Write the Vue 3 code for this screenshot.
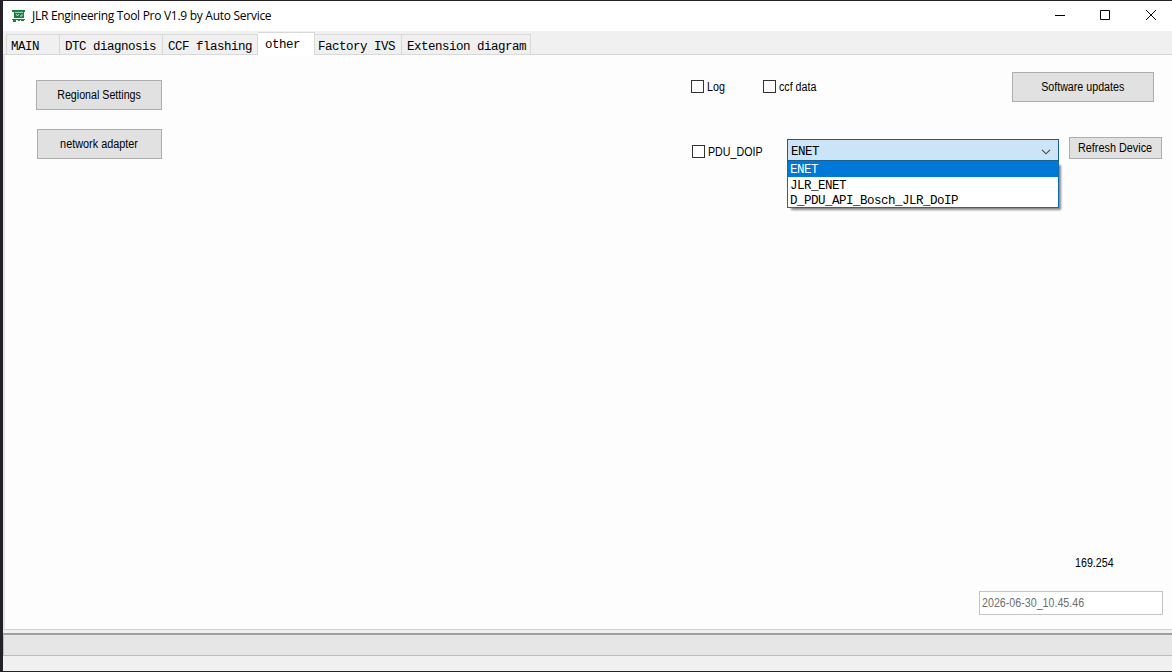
<script setup>
import { ref } from 'vue'

const tabs = [
  { label: 'MAIN', cls: 'main' },
  { label: 'DTC diagnosis', cls: 'dtc' },
  { label: 'CCF flashing', cls: 'ccf' },
  { label: 'other', cls: 'other' },
  { label: 'Factory IVS', cls: 'factory' },
  { label: 'Extension diagram', cls: 'extension' },
]
const activeTab = ref('other')
const devices = ['ENET', 'JLR_ENET', 'D_PDU_API_Bosch_JLR_DoIP']
const selected = ref('ENET')
</script>

<template>
  <div class="window">
    <header class="titlebar">
      <svg class="logo" width="14" height="14" viewBox="0 0 14 14">
        <path fill="#16803f" d="M0 1h13v2h-1v6H2V3H0z" />
        <path fill="none" stroke="#d9f2e1" stroke-width=".8" d="M3 3.4h8M4 5l1.5 2L7 5M8 7h2V5" />
        <path fill="#16803f" d="M0 10h13v1H0zM1 11h3v2H1zM9 11h3v1H9zM6 11h2v1H6z" />
      </svg>
      <span class="title">JLR Engineering Tool Pro V1.9 by Auto Service</span>
      <div class="controls">
        <svg class="min" width="12" height="12" viewBox="0 0 12 12"><path d="M1 5.5h10" /></svg>
        <svg width="12" height="12" viewBox="0 0 12 12"><path d="M1.5 .5h9v9h-9z" /></svg>
        <svg width="12" height="12" viewBox="0 0 12 12"><path d="M1 0l10 10M11 0L1 10" /></svg>
      </div>
    </header>

    <nav class="tabs">
      <button
        v-for="t in tabs"
        :key="t.cls"
        class="tab mono"
        :class="[t.cls, { active: activeTab === t.cls }]"
        @click="activeTab = t.cls"
      >{{ t.label }}</button>
    </nav>

    <main class="panel">
      <section class="left">
        <button class="btn regional"><span>Regional Settings</span></button>
        <button class="btn network"><span>network adapter</span></button>
      </section>

      <section class="right">
        <div class="row first">
          <label class="check log"><i></i><span>Log</span></label>
          <label class="check ccfdata"><i></i><span>ccf data</span></label>
          <button class="btn updates"><span>Software updates</span></button>
        </div>
        <div class="row second">
          <label class="check pdu"><i></i><span>PDU_DOIP</span></label>
          <div class="combo">
            <div class="field mono">
              <span>{{ selected }}</span>
              <svg width="10" height="6" viewBox="0 0 10 6"><path d="M1 .8l4 4 4-4" /></svg>
            </div>
            <ul class="list mono">
              <li v-for="d in devices" :key="d" :class="{ on: d === selected }">{{ d }}</li>
            </ul>
          </div>
          <button class="btn refresh"><span>Refresh Device</span></button>
        </div>
        <div class="bottom">
          <span class="ip"><span>169.254</span></span>
          <div class="stamp"><span>2026-06-30_10.45.46</span></div>
        </div>
      </section>
    </main>

    <div class="progress"></div>
    <footer class="footer"></footer>
  </div>
</template>

<style>
body { overflow: hidden; }
</style>

<style scoped>
* { box-sizing: border-box; }
.window {
  width: 1172px;
  height: 672px;
  display: flex;
  flex-direction: column;
  background: #f0f0f0;
  border-top: 1px solid #242127;
  border-left: 3px solid #242127;
  border-bottom: 1px solid #242127;
  font: 12px/16px "Liberation Sans", Arial, sans-serif;
  color: #000;
  white-space: nowrap;
}
button { margin: 0; padding: 0; font: inherit; color: inherit; white-space: nowrap; }
.mono {
  font-family: "Liberation Mono", "Courier New", monospace;
  font-size: 12.5px;
  letter-spacing: -0.5px;
  color: #000;
}
.titlebar {
  height: 30px;
  flex: none;
  display: flex;
  align-items: center;
  background: #fff;
  padding: 0 15px 1px 9px;
}
.logo { flex: none; margin-right: 6px; }
.title { font-family: "Open Sans", "Noto Sans", sans-serif; font-size: 12px; letter-spacing: -0.28px; }
.controls { margin-left: auto; display: flex; gap: 34px; }
.controls svg { fill: none; stroke: #000; stroke-width: 1; }
.controls .min { margin-right: -1px; }
.tabs {
  height: 24px;
  flex: none;
  display: flex;
  align-items: flex-end;
  padding-left: 3px;
  box-shadow: inset 0 -1px #d5d5d5;
}
.tab {
  height: 21px;
  border: 1px solid #d9d9d9;
  border-left: 0;
  background: #f0f0f0;
  text-align: left;
  line-height: 14px;
  padding: 5px 0 0 5px;
}
.main { width: 54px; border-left: 1px solid #d9d9d9; padding-left: 4px; }
.dtc { width: 103px; }
.ccf { width: 95px; }
.other { width: 57px; padding-left: 7px; }
.factory { width: 87px; padding-left: 3px; }
.extension { width: 129px; }
.tab.active { height: 23px; background: #fff; border-bottom: 0; padding-top: 1px; }
.panel {
  height: 575px;
  flex: none;
  display: flex;
  background: #fdfdfd;
  border-left: 2px solid #e4e4e4;
  border-bottom: 1px solid #d0d0d0;
}
.left { padding: 25px 0 0 31px; width: 686px; display: flex; flex-direction: column; gap: 19px; }
.btn {
  border: 1px solid #adadad;
  background: #e1e1e1;
  display: flex;
  align-items: center;
  justify-content: center;
}
.btn span { transform: scaleX(0.89); }
.btn.refresh span, .btn.network span { transform: scaleX(0.905); }
.check span, .ip span, .stamp span { display: inline-block; transform: scaleX(0.89); transform-origin: 0 50%; }
.regional { width: 126px; height: 30px; }
.network { width: 125px; height: 30px; margin-left: 1px; }
.right { flex: 1; display: flex; flex-direction: column; padding: 17px 0 14px; }
.row { display: flex; align-items: flex-start; }
.first { height: 67px; }
.check { display: flex; align-items: flex-start; height: 16px; gap: 3px; }
.check i { width: 13px; height: 13px; margin-top: 1px; border: 1px solid #333; background: #fff; }
.log { width: 72px; margin-top: 7px; }
.ccfdata { width: 249px; margin-top: 7px; }
.updates { width: 142px; height: 30px; }
.pdu { margin: 5px 0 0 1px; width: 95px; }
.combo { width: 272px; position: relative; }
.field {
  height: 22px;
  border: 1px solid #195f94;
  background: #cce4f7;
  display: flex;
  align-items: center;
  justify-content: space-between;
  padding: 3px 7px 0 3px;
}
.field svg { fill: none; stroke: #444; stroke-width: 1.1; }
.list {
  position: absolute;
  top: 22px;
  left: 0;
  width: 272px;
  margin: 0;
  padding: 0;
  list-style: none;
  border: 1px solid #0f6cb0;
  border-top: 0;
  background: #fff;
  box-shadow: 3px 3px 2px -1px #888;
}
.list li { height: 15px; line-height: 18px; padding-left: 2px; }
.list li.on { height: 16px; line-height: 19px; background: #0078d7; color: #fff; }
.refresh { width: 93px; height: 22px; margin: -2px 0 0 10px; }
.bottom { margin-top: auto; display: flex; flex-direction: column; padding-left: 288px; gap: 20px; }
.ip { padding-left: 96px; }
.stamp { width: 184px; height: 24px; border: 1px solid #c4c4c4; background: #fff; padding: 3px 2px; color: #6d6d6d; }
.progress {
  height: 23px;
  flex: none;
  margin-top: 3px;
  border: 1px solid #bcbcbc;
  border-top: 2px solid #a0a0a0;
  border-right: 0;
  background: #e6e6e6;
}
.footer { flex: 1; background: #f0f0f0; }
</style>
